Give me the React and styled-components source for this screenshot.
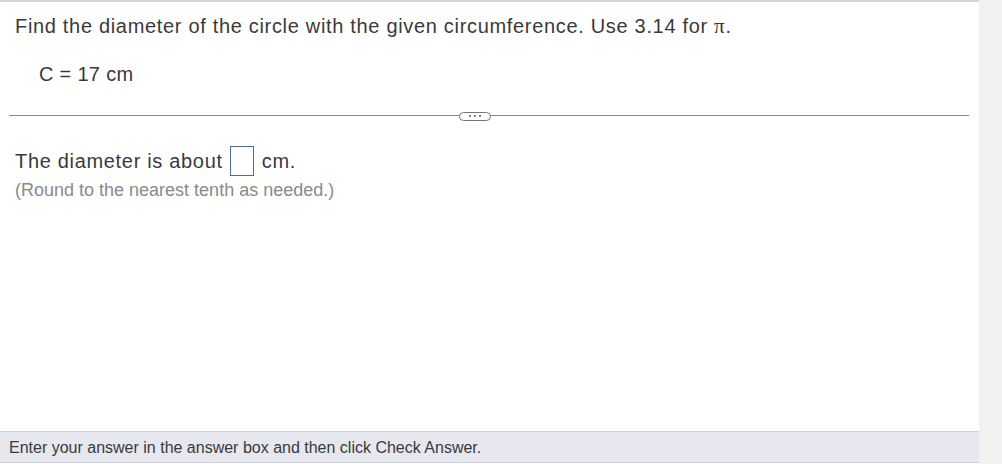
import styled, { createGlobalStyle } from 'styled-components';

const GlobalStyle = createGlobalStyle`
	html, body {
		margin: 0;
		padding: 0;
		background: #ffffff;
	}
	body {
		font-family: 'Liberation Sans', Arial, sans-serif;
		color: #333;
	}
`;

const SPage = styled.div`
	display: flex;
	width: 1002px;
	height: 464px;
	overflow: hidden;
`;

const SMain = styled.div`
	display: flex;
	flex-direction: column;
	width: 979px;
	height: 464px;
	border-top: 2px solid #d5d5dd;
	box-sizing: border-box;
`;

const SSide = styled.div`
	flex: 1;
	background: #f1f1f1;
`;

const SText = styled.div`
	font-size: 20px;
	letter-spacing: 0.68px;
	line-height: 22px;
	color: #3a3a3a;
`;

const SQuestion = styled(SText)`
	padding: 13px 0 0 15px;
`;

const SPi = styled.span`
	font-family: 'Liberation Serif', 'Times New Roman', serif;
	font-size: 21px;
`;

const SGiven = styled(SText)`
	padding: 26px 0 0 39px;
	letter-spacing: 0.3px;
`;

const SDividerRow = styled.div`
	position: relative;
	display: flex;
	align-items: center;
	justify-content: center;
	margin: 26px 10px 0 9px;
	height: 10px;

	&::before {
		content: '';
		position: absolute;
		left: 0;
		right: 0;
		top: 4px;
		border-top: 1px solid #8a8a8a;
	}
`;

const SPill = styled.button`
	position: relative;
	display: flex;
	align-items: center;
	justify-content: center;
	gap: 3px;
	width: 32px;
	height: 9px;
	padding: 0;
	border: 1px solid #777;
	border-radius: 5px;
	background: #fff;
	margin-right: 28px;
`;

const SDot = styled.span`
	width: 2px;
	height: 2px;
	border-radius: 1px;
	background: #555;
`;

const SAnswer = styled(SText)`
	display: flex;
	align-items: center;
	padding: 25px 0 0 15px;
	line-height: 30px;
`;

const SBox = styled.span`
	display: inline-block;
	width: 22px;
	height: 28px;
	margin: 0 8px 0 7px;
	border: 1px solid #4b6d9a;
`;

const SHint = styled.div`
	padding: 0 0 0 15px;
	font-size: 18px;
	line-height: 28px;
	color: #8a8a8a;
`;

const SSpacer = styled.div`
	flex: 1;
`;

const SFooter = styled.div`
	display: flex;
	align-items: center;
	box-sizing: border-box;
	height: 32px;
	padding: 1px 0 0 9px;
	margin-bottom: 1px;
	background: #e6e7ef;
	border-top: 1px solid #cfd0d8;
	border-bottom: 1px solid #cfd0d8;
	font-size: 16px;
	color: #3a3a3a;
`;

const App = () => (
	<>
		<GlobalStyle />
		<SPage>
			<SMain>
				<SQuestion>
					Find the diameter of the circle with the given circumference. Use 3.14 for <SPi>π</SPi>.
				</SQuestion>
				<SGiven>C = 17 cm</SGiven>
				<SDividerRow>
					<SPill aria-label="more">
						<SDot />
						<SDot />
						<SDot />
					</SPill>
				</SDividerRow>
				<SAnswer>
					The diameter is about
					<SBox />
					cm.
				</SAnswer>
				<SHint>(Round to the nearest tenth as needed.)</SHint>
				<SSpacer />
				<SFooter>Enter your answer in the answer box and then click Check Answer.</SFooter>
			</SMain>
			<SSide />
		</SPage>
	</>
);

export default App;
